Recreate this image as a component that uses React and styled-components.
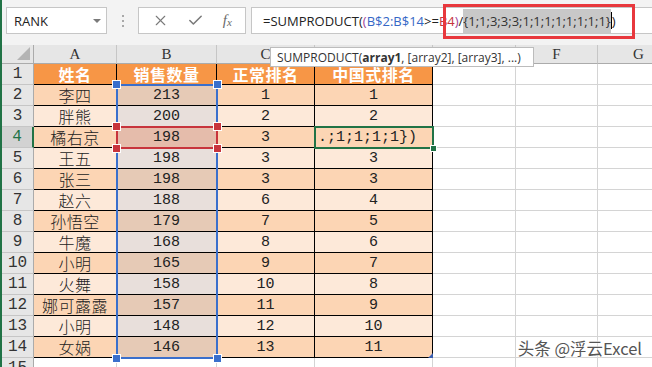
import React from 'react';
import styled, { createGlobalStyle } from 'styled-components';
import { X, Check } from 'lucide-react';

const GlobalStyle = createGlobalStyle`
    html, body {
        margin: 0;
        padding: 0;
        background: #fff;
    }
    body {
        font-family: "Open Sans", "Noto Sans CJK SC", sans-serif;
        overflow: hidden;
    }
`;

const CJK = '"Noto Sans CJK SC", sans-serif';
const MONO = '"Liberation Mono", "DejaVu Sans Mono", monospace';

const Page = styled.div`
    position: relative;
    width: 650px;
    height: 367px;
    overflow: hidden;
    border-left: 2px solid #217346;
    background: #f3f3f3;
`;

const FormulaBar = styled.div`
    height: 45px;
    display: flex;
    align-items: flex-start;
    padding-top: 7px;
    box-sizing: border-box;
    padding-left: 4px;
`;

const NameBox = styled.div`
    width: 101px;
    height: 27px;
    box-sizing: border-box;
    background: #fff;
    border: 1px solid #c6c6c6;
    display: flex;
    align-items: center;
    justify-content: space-between;
    padding: 0 5px 0 7px;
    font-size: 13px;
    color: #222;
`;

const Caret = styled.span`
    width: 0;
    height: 0;
    border-left: 4px solid transparent;
    border-right: 4px solid transparent;
    border-top: 4px solid #7a7a7a;
`;

const Grip = styled.div`
    width: 31px;
    height: 27px;
    display: flex;
    flex-direction: column;
    align-items: center;
    justify-content: center;
    gap: 3px;

    span {
        width: 2px;
        height: 2px;
        background: #a8a8a8;
    }
`;

const ButtonBox = styled.div`
    width: 108px;
    height: 27px;
    box-sizing: border-box;
    background: #fff;
    border: 1px solid #c6c6c6;
    display: flex;
    align-items: center;
    justify-content: space-around;
    padding: 0 4px;
    color: #7a7a7a;
`;

const Fx = styled.span`
    font-family: "Liberation Serif", serif;
    font-style: italic;
    font-size: 15px;
    color: #6a6a6a;

    sub {
        font-size: 11px;
        vertical-align: -1px;
    }
`;

const FormulaInput = styled.div`
    flex: 1;
    margin-left: 5px;
    height: 27px;
    box-sizing: border-box;
    background: #fff;
    border: 1px solid #c6c6c6;
    border-right: none;
    display: flex;
    align-items: center;
    padding-left: 11px;
    font-size: 13px;
    white-space: nowrap;
    color: #222;
`;

const Tok = styled.span`
    color: ${p => p.$c || '#222'};
`;

const Picked = styled.span`
    background: #c8c8c8;
    padding: 3px 0;
    color: #333;
`;

const Cursor = styled.span`
    display: inline-block;
    width: 1px;
    height: 17px;
    background: #000;
    vertical-align: middle;
`;

const RedMark = styled.div`
    position: absolute;
    left: 441px;
    top: 4px;
    width: 192px;
    height: 35px;
    box-sizing: border-box;
    border: 3px solid #e8383d;
`;

const Tooltip = styled.div`
    position: absolute;
    left: 268px;
    top: 47px;
    width: 264px;
    height: 20px;
    box-sizing: border-box;
    background: #fff;
    border: 1px solid #bcbcbc;
    display: flex;
    align-items: center;
    padding-left: 6px;
    font-size: 12px;
    color: #333;
    white-space: nowrap;
    z-index: 3;

    b {
        font-weight: 700;
    }
`;

const Sheet = styled.div`
    position: relative;
    display: grid;
    grid-template-columns: 32px 83px 100px 98px 118px 83px 82px 82px;
    grid-template-rows: 19px repeat(15, 21px);
    background: #fff;
`;

const Corner = styled.div`
    background: #e6e6e6;
    border-right: 1px solid #ababab;
    border-bottom: 1px solid #ababab;
    position: relative;

    &::after {
        content: '';
        position: absolute;
        right: 3px;
        bottom: 3px;
        border-left: 13px solid transparent;
        border-bottom: 13px solid #b4b4b4;
    }
`;

const ColHead = styled.div`
    background: #e6e6e6;
    border-right: 1px solid #c6c6c6;
    border-bottom: 1px solid #ababab;
    display: flex;
    align-items: center;
    justify-content: center;
    font-family: "Liberation Serif", serif;
    font-size: 15px;
    line-height: 17px;
    color: #333;
`;

const RowHead = styled.div`
    background: ${p => (p.$active ? '#d2d2d2' : '#e6e6e6')};
    border-right: ${p => (p.$active ? '2px solid #217346' : '1px solid #ababab')};
    border-bottom: 1px solid #c6c6c6;
    display: flex;
    align-items: center;
    justify-content: center;
    font-family: ${MONO};
    font-size: 16px;
    line-height: 19px;
    color: ${p => (p.$active ? '#217346' : '#333')};
`;

const Cell = styled.div`
    background: ${p => p.$bg || '#fff'};
    border-right: 1px solid ${p => (p.$table ? '#000' : '#d4d4d4')};
    border-bottom: 1px solid ${p => (p.$table ? '#000' : '#d4d4d4')};
    display: flex;
    align-items: center;
    justify-content: ${p => (p.$left ? 'flex-start' : 'center')};
    padding-left: ${p => (p.$left ? '3px' : '0')};
    font-family: ${p => (p.$cjk ? CJK : MONO)};
    font-size: ${p => (p.$cjk ? '16px' : '15px')};
    line-height: 19px;
    font-weight: ${p => (p.$head ? 700 : p.$cjk ? 300 : 400)};
    color: ${p => (p.$head ? '#fff' : '#222')};
    letter-spacing: ${p => (p.$cjk ? '0.5px' : '0')};
    white-space: nowrap;
`;

const Range = styled.div`
    position: absolute;
    left: 114px;
    top: ${p => p.$top}px;
    width: 102px;
    height: ${p => p.$h}px;
    box-sizing: border-box;
    border: 2px solid ${p => p.$c};
    pointer-events: none;
    z-index: ${p => p.$z || 1};
`;

const Knob = styled.span`
    position: absolute;
    width: 7px;
    height: 7px;
    box-sizing: border-box;
    background: ${p => p.$c};
    outline: 1px solid #fff;
    ${p => (p.$x === 'l' ? 'left: -5px;' : 'right: -5px;')}
    ${p => (p.$y === 't' ? 'top: -5px;' : 'bottom: -5px;')}
`;

const ActiveCell = styled.div`
    position: absolute;
    left: 312px;
    top: 81px;
    width: 120px;
    height: 23px;
    box-sizing: border-box;
    border: 2px solid #217346;
    z-index: 2;

    &::after {
        content: '';
        position: absolute;
        right: -4px;
        bottom: -4px;
        width: 5px;
        height: 5px;
        background: #217346;
        outline: 1px solid #fff;
    }
`;

const TableHandle = styled.div`
    position: absolute;
    left: 426px;
    top: 308px;
    border-left: 5px solid transparent;
    border-bottom: 5px solid #3a5fb0;
`;

const Watermark = styled.div`
    position: absolute;
    right: 10px;
    bottom: 9px;
    font-family: ${CJK};
    font-size: 16.5px;
    line-height: 20px;
    color: #555;
    text-shadow: 0 0 2px #fff, 0 0 2px #fff, 0 0 3px #fff;
    z-index: 4;
`;

const rows = [
    ['李四', 213, 1, 1],
    ['胖熊', 200, 2, 2],
    ['橘右京', 198, 3, '.;1;1;1;1})'],
    ['王五', 198, 3, 3],
    ['张三', 198, 3, 3],
    ['赵六', 188, 6, 4],
    ['孙悟空', 179, 7, 5],
    ['牛魔', 168, 8, 6],
    ['小明', 165, 9, 7],
    ['火舞', 158, 10, 8],
    ['娜可露露', 157, 11, 9],
    ['小明', 148, 12, 10],
    ['女娲', 146, 13, 11],
];

const DARK = '#fcd5b4';
const LIGHT = '#fde9d9';
const B_DARK = '#e6cab6';
const B_LIGHT = '#e8dfdb';
const B_RED = '#e5bcab';

const Knobs = ({ c }) => (
    <>
        <Knob $c={c} $x="l" $y="t" />
        <Knob $c={c} $x="r" $y="t" />
        <Knob $c={c} $x="l" $y="b" />
        <Knob $c={c} $x="r" $y="b" />
    </>
);

const App = () => (
    <>
        <GlobalStyle />
        <Page>
            <FormulaBar>
                <NameBox>RANK<Caret /></NameBox>
                <Grip><span /><span /><span /></Grip>
                <ButtonBox>
                    <X size={17} strokeWidth={1.6} />
                    <Check size={17} strokeWidth={2.2} />
                    <Fx>f<sub>x</sub></Fx>
                </ButtonBox>
                <FormulaInput>
                    <Tok>=SUMPRODUCT(</Tok>
                    <Tok $c="#a0439a">(</Tok>
                    <Tok $c="#3567c6">B$2:B$14</Tok>
                    <Tok>&gt;=</Tok>
                    <Tok $c="#c8343c">B4</Tok>
                    <Tok $c="#a0439a">)</Tok>
                    <Tok>/</Tok>
                    <Picked>{'{1;1;3;3;3;1;1;1;1;1;1;1;1}'}</Picked>
                    <Cursor />
                    <Tok>)</Tok>
                </FormulaInput>
            </FormulaBar>
            <RedMark />
            <Tooltip>SUMPRODUCT(<b>array1</b>, [array2], [array3], ...)</Tooltip>

            <Sheet>
                <Corner />
                {['A', 'B', 'C', 'D', 'E', 'F', 'G'].map(l => (
                    <ColHead key={l}>{l}</ColHead>
                ))}

                <RowHead>1</RowHead>
                {['姓名', '销售数量', '正常排名', '中国式排名'].map(h => (
                    <Cell key={h} $table $head $cjk $bg="#f79646">{h}</Cell>
                ))}
                <Cell /><Cell /><Cell />

                {rows.map((r, i) => {
                    const n = i + 2;
                    const dark = n % 2 === 0;
                    const bg = dark ? DARK : LIGHT;
                    const bBg = n === 4 ? B_RED : dark ? B_DARK : B_LIGHT;
                    return (
                        <React.Fragment key={n}>
                            <RowHead $active={n === 4}>{n}</RowHead>
                            <Cell $table $cjk $bg={bg}>{r[0]}</Cell>
                            <Cell $table $bg={bBg}>{r[1]}</Cell>
                            <Cell $table $bg={bg}>{r[2]}</Cell>
                            <Cell $table $bg={bg} $left={n === 4}>{r[3]}</Cell>
                            <Cell /><Cell /><Cell />
                        </React.Fragment>
                    );
                })}

                <RowHead>15</RowHead>
                {Array.from({ length: 7 }).map((_, i) => (
                    <Cell key={i} />
                ))}

                <Range $c="#3a6fcc" $top={39} $h={275}>
                    <Knobs c="#3a6fcc" />
                </Range>
                <Range $c="#c8343c" $top={81} $h={23} $z={2}>
                    <Knobs c="#c8343c" />
                </Range>
                <ActiveCell />
                <TableHandle />
            </Sheet>
            <Watermark>头条 @浮云Excel</Watermark>
        </Page>
    </>
);

export default App;
